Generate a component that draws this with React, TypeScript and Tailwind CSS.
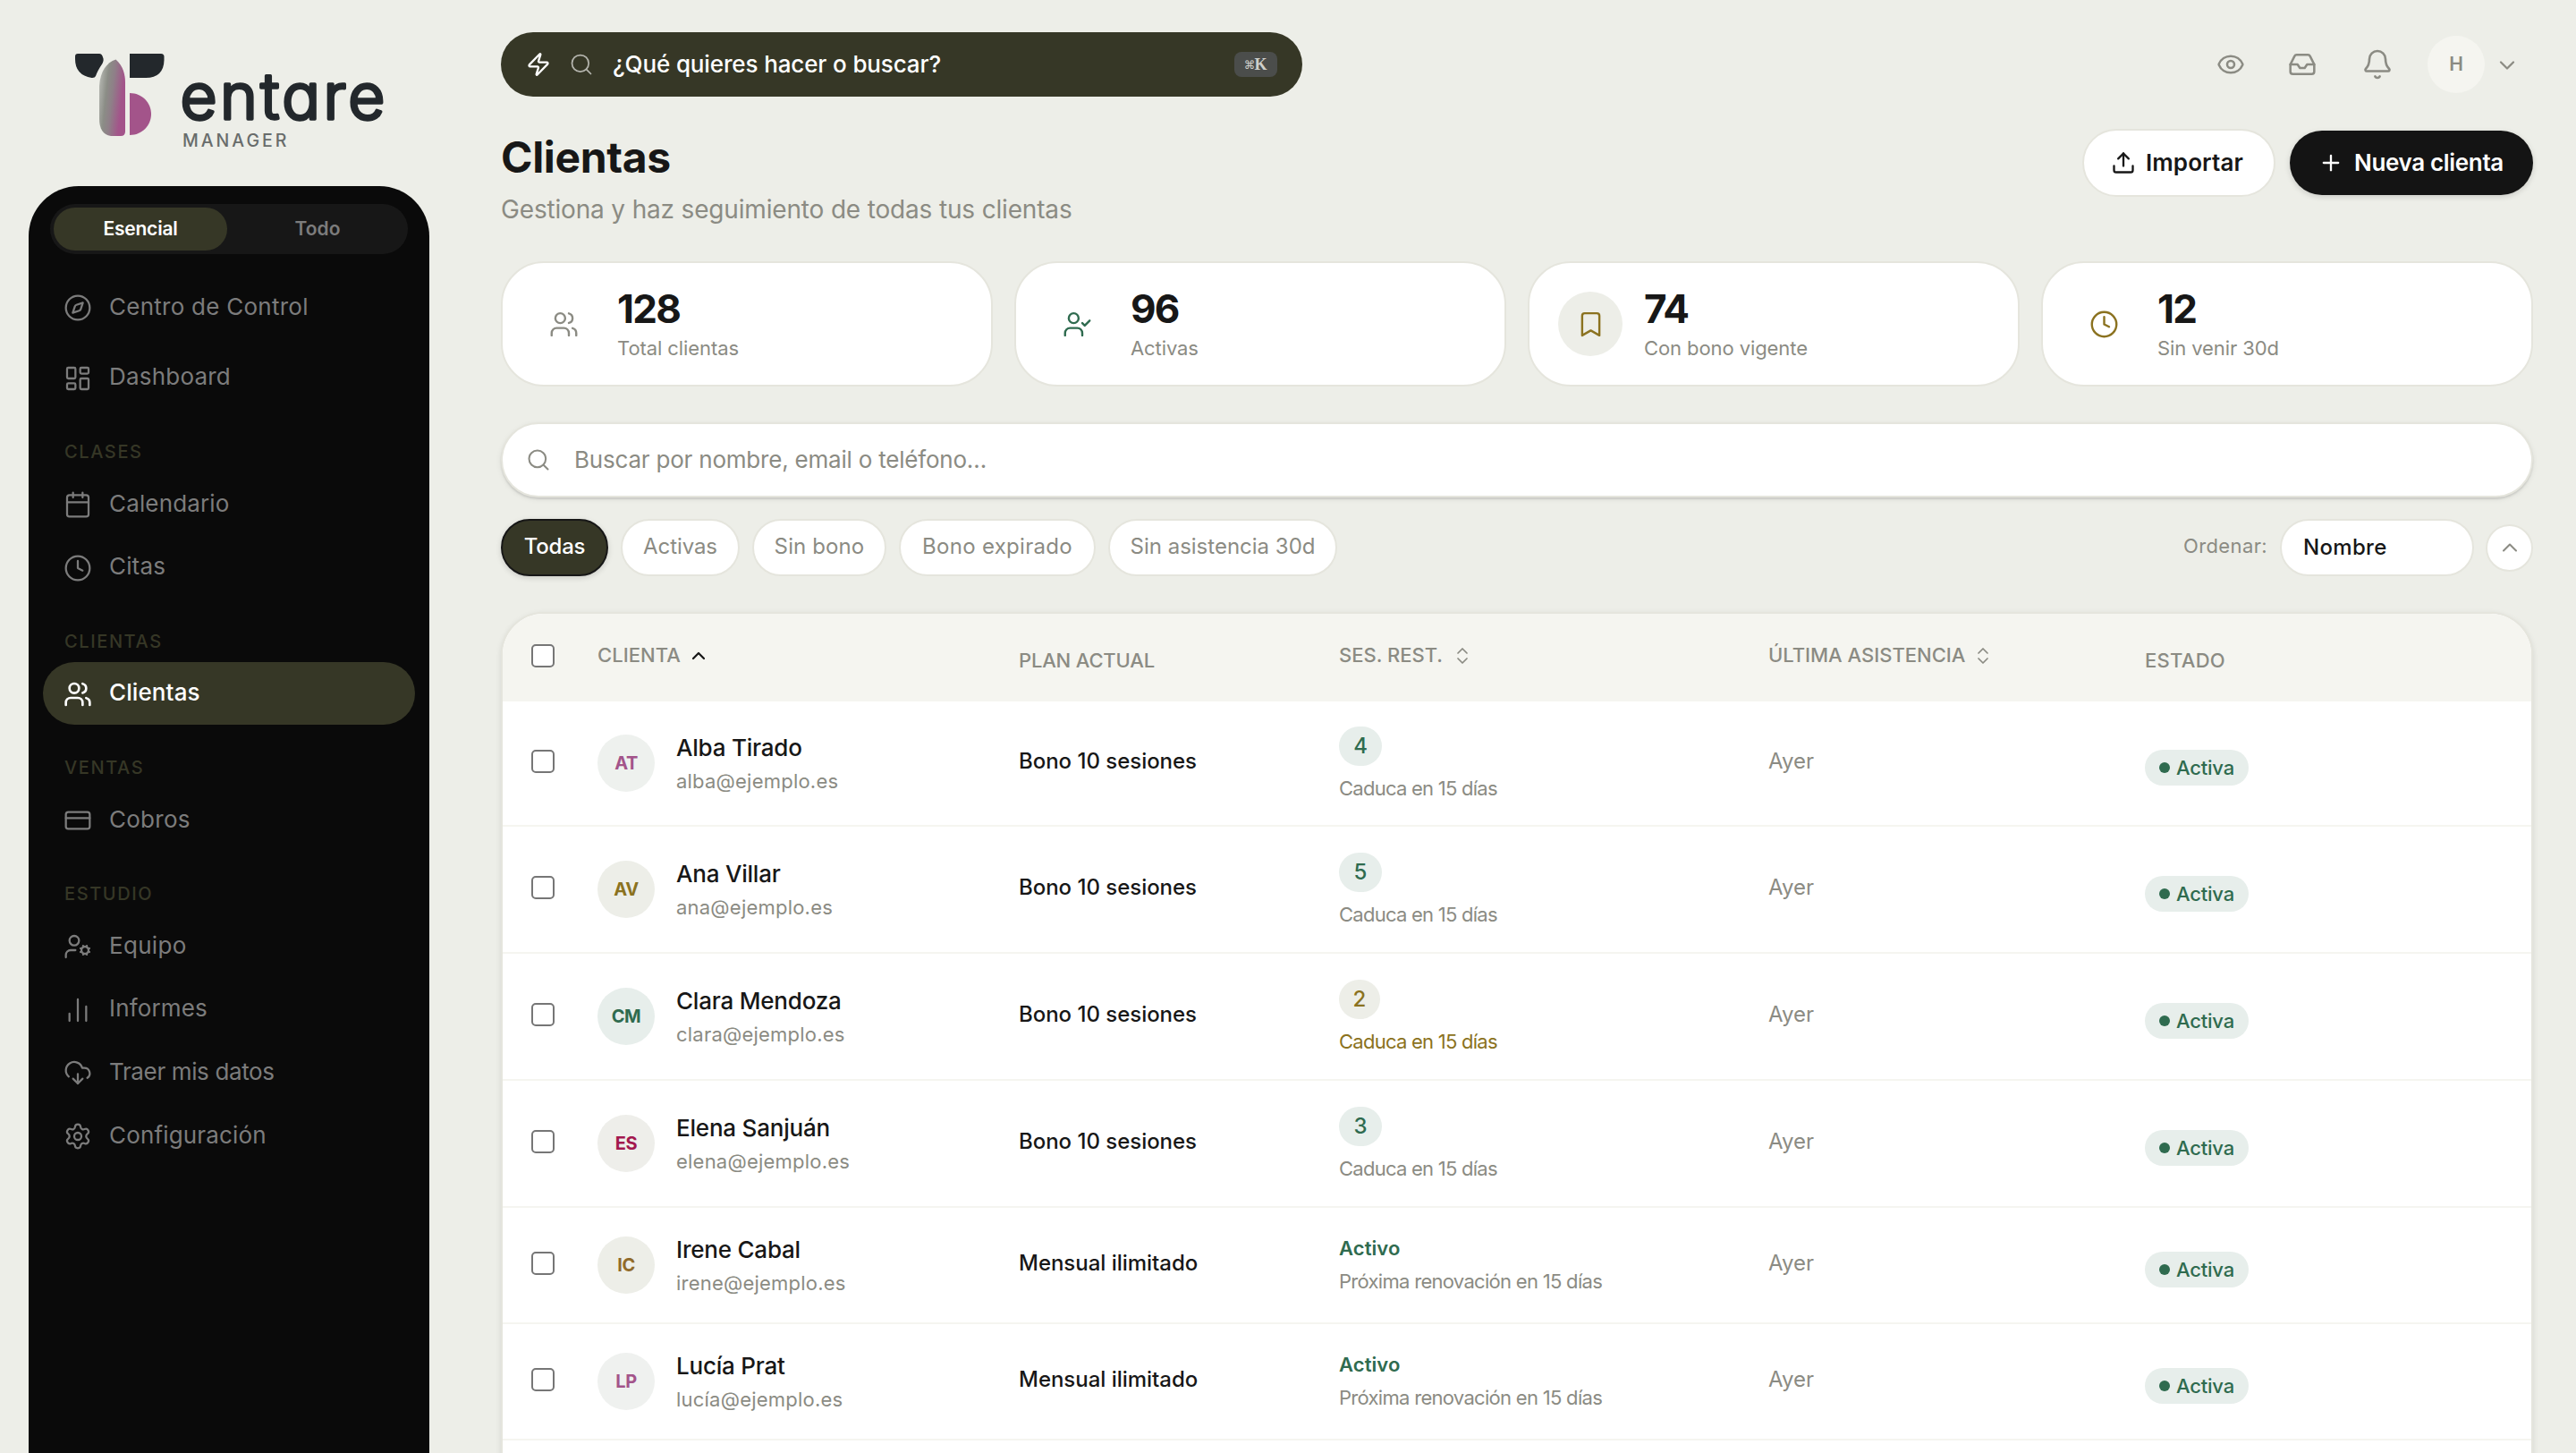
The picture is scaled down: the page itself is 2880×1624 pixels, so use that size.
import { useState } from "react";
import {
  Bell,
  Bookmark,
  Calendar,
  ChevronDown,
  ChevronUp,
  ChevronsUpDown,
  Clock,
  Eye,
  Inbox,
  Plus,
  Search,
  Upload,
  UserCheck,
  Users,
  Zap,
  Compass,
  CreditCard,
  LayoutDashboard,
  Settings,
  UserCog,
  ChartNoAxesColumn,
  CloudDownload,
} from "lucide-react";

const navGroups = [
  {
    title: "CLASES",
    items: [
      { name: "Calendario", icon: Calendar, tracking: "tracking-[0.006em]" },
      { name: "Citas", icon: Clock, tracking: "tracking-[0.006em]" },
    ],
  },
  {
    title: "CLIENTAS",
    items: [{ name: "Clientas", icon: Users, tracking: "tracking-[0.004em]" }],
  },
  {
    title: "VENTAS",
    items: [{ name: "Cobros", icon: CreditCard, tracking: "tracking-[0.010em]" }],
  },
  {
    title: "ESTUDIO",
    items: [
      { name: "Equipo", icon: UserCog, tracking: "tracking-[0.012em]" },
      { name: "Informes", icon: ChartNoAxesColumn, tracking: "tracking-[0.006em]" },
      { name: "Traer mis datos", icon: CloudDownload, tracking: "tracking-[-0.014em]" },
      { name: "Configuración", icon: Settings, tracking: "tracking-[0.006em]" },
    ],
  },
];

const stats = [
  { value: "128", label: "Total clientas", icon: Users, color: "text-[#8b8b83]", bg: "bg-white" },
  { value: "96", label: "Activas", icon: UserCheck, color: "text-[#2f6b4f]", bg: "bg-white" },
  { value: "74", label: "Con bono vigente", icon: Bookmark, color: "text-[#8b7220]", bg: "bg-[#edeee8]" },
  { value: "12", label: "Sin venir 30d", icon: Clock, color: "text-[#8b7220]", bg: "bg-white" },
];

const filters = [
  { name: "Todas", size: "w-[120px] tracking-[-0.008em]" },
  { name: "Activas", size: "w-[133px] tracking-[-0.003em]" },
  { name: "Sin bono", size: "w-[150px] tracking-[0.005em]" },
  { name: "Bono expirado", size: "w-[220px] tracking-[0.012em]" },
  { name: "Sin asistencia 30d", size: "w-[256px] tracking-normal" },
];

const clients = [
  { initials: "AT", name: "Alba Tirado", email: "alba@ejemplo.es", plan: "Bono 10 sesiones", sessions: 4, avatar: "bg-[#eef1ee] text-[#a3548a]", height: "h-[140px]" },
  { initials: "AV", name: "Ana Villar", email: "ana@ejemplo.es", plan: "Bono 10 sesiones", sessions: 5, avatar: "bg-[#edeee8] text-[#8b7220]", height: "h-[142px]" },
  { initials: "CM", name: "Clara Mendoza", email: "clara@ejemplo.es", plan: "Bono 10 sesiones", sessions: 2, avatar: "bg-[#e7eeeb] text-[#2f6b4f]", height: "h-[142px]" },
  { initials: "ES", name: "Elena Sanjuán", email: "elena@ejemplo.es", plan: "Bono 10 sesiones", sessions: 3, avatar: "bg-[#eeeeea] text-[#a3184f]", height: "h-[142px]" },
  { initials: "IC", name: "Irene Cabal", email: "irene@ejemplo.es", plan: "Mensual ilimitado", sessions: null, avatar: "bg-[#edeee8] text-[#916b2b]", height: "h-[130px]" },
  { initials: "LP", name: "Lucía Prat", email: "lucía@ejemplo.es", plan: "Mensual ilimitado", sessions: null, avatar: "bg-[#eff1ef] text-[#a3548a]", height: "h-[130px]" },
];

const Logo = () => (
  <svg width="360" height="120" viewBox="80 50 360 120" className="block">
    <defs>
      <linearGradient id="leaf" x1="0" y1="0.3" x2="1" y2="0.62">
        <stop offset="0" stopColor="#b3b5af" />
        <stop offset="0.28" stopColor="#8b8d86" />
        <stop offset="0.5" stopColor="#8f7f88" />
        <stop offset="0.85" stopColor="#a3548a" />
      </linearGradient>
    </defs>
    <path d="M87 60H111Q114 60 115 64Q116.500 67 114.500 71Q109 79 107 85Q106 87.300 102.500 87Q84 84 84 66V63Q84 60 87 60Z" fill="#23282c" />
    <path d="M145 60H180Q183.500 60 183.500 63.500V67Q183 87 163 87H145Z" fill="#23282c" />
    <path d="M129.500 66.500C138 74 140 84 140 92V147Q140 152 135 152H124C115 151 111 143 111 133V96C112 80 119 70 129.500 66.500Z" fill="url(#leaf)" />
    <path d="M145 104C159 104 169 115 169 127.500S159 151 145 151Z" fill="#a3548a" />
    <text
      x="201.500"
      y="132.500"
      fontSize="71"
      fontWeight="300"
      textLength="229"
      fill="#23282c"
      stroke="#23282c"
      strokeWidth="3.500"
      strokeLinejoin="round"
      className="font-[Inter,sans-serif] [font-feature-settings:'cv11']"
    >
      entare
    </text>
    <text x="204" y="163.500" fontSize="19.500" fontWeight="500" letterSpacing="3" fill="#686c6b" className="font-[Inter,sans-serif]">
      MANAGER
    </text>
  </svg>
);

const NavItem = ({ name, icon: Icon, tracking, active = false }: any) => (
  <div
    className={`flex h-[70.600px] items-center gap-[19px] rounded-full pl-[23px] text-[26px] ${tracking} ${
      active ? "bg-[#363726] font-medium text-white" : "text-[#7c7c7c]"
    }`}
  >
    <Icon size={32} strokeWidth={active ? 2 : 1.7} className="mt-0.5" />
    <span className="pb-0.5">{name}</span>
  </div>
);

const Sidebar = () => (
  <aside className="flex w-[480px] shrink-0 flex-col pl-8">
    <div className="h-[208px] pl-12 pt-[50px]">
      <Logo />
    </div>
    <div className="flex-1 rounded-t-[56px] bg-[#0a0a0a] px-4 pt-5">
      <div className="ml-2 flex h-14 w-[400px] rounded-full bg-[#171717] p-1 text-[21px] font-semibold">
        <div className="flex w-[194px] items-center justify-center rounded-full bg-[#363726] tracking-[-0.010em] text-white">
          Esencial
        </div>
        <div className="flex flex-1 items-center justify-center pl-1 text-[#7c7c7c]">Todo</div>
      </div>
      <nav className="pt-6">
        <NavItem name="Centro de Control" icon={Compass} tracking="tracking-[0.010em]" />
        <div className="h-2" />
        <NavItem name="Dashboard" icon={LayoutDashboard} tracking="tracking-[0.008em]" />
        {navGroups.map((group) => (
          <div key={group.title}>
            <div className="h-[70.600px] pl-6 pt-[33px] text-[20px] font-medium leading-[30px] tracking-[0.080em] text-[#363726]">
              {group.title}
            </div>
            {group.items.map((item) => (
              <NavItem key={item.name} {...item} active={item.name === "Clientas"} />
            ))}
          </div>
        ))}
      </nav>
    </div>
  </aside>
);

const TopBar = () => (
  <div className="flex h-36 shrink-0 items-center justify-between">
    <div className="flex h-[72px] w-[896px] items-center rounded-full bg-[#363726] pl-7 pr-7">
      <Zap size={28} strokeWidth={2} className="text-white" />
      <Search size={28} strokeWidth={1.5} className="ml-5 text-[#b4b4ad]" />
      <span className="ml-[21px] flex-1 pb-0.5 text-[26px] font-medium tracking-[-0.005em] text-white">
        ¿Qué quieres hacer o buscar?
      </span>
      <kbd className="flex h-7 w-12 items-center justify-center rounded-lg bg-[#4b4d4b] text-[#cfcfca]">
        <span className="font-['DejaVu_Sans_Mono',monospace] text-[18px]">⌘</span>
        <span className="font-['Liberation_Serif',serif] text-[18px] font-bold">K</span>
      </kbd>
    </div>
    <div className="flex items-center text-[#8b8b83]">
      <Eye size={32} strokeWidth={1.9} />
      <Inbox size={32} strokeWidth={1.9} className="ml-12" />
      <Bell size={36} strokeWidth={1.75} className="ml-[50px]" />
      <div className="ml-[38px] flex size-16 items-center justify-center rounded-full bg-[#f5f5f0] text-[21px] font-semibold">
        H
      </div>
      <ChevronDown size={28} strokeWidth={1.9} className="ml-[11px] mr-[15px] mt-0.5" />
    </div>
  </div>
);

const StatCards = () => (
  <div className="mt-8 grid shrink-0 grid-cols-4 gap-6">
    {stats.map(({ value, label, icon: Icon, color, bg }) => (
      <div key={label} className="flex h-[140px] items-center gap-6 rounded-[48px] border-2 border-[#e5e5dd] bg-white pl-8">
        <div className={`flex size-[72px] items-center justify-center rounded-full ${bg} ${color}`}>
          <Icon size={33} strokeWidth={1.75} />
        </div>
        <div className="pt-0.5">
          <div className="text-[44px] font-bold leading-[52px] tracking-[-0.040em] text-[#171717]">{value}</div>
          <div className="text-[22px] leading-9 tracking-[-0.004em] text-[#8b8b83]">{label}</div>
        </div>
      </div>
    ))}
  </div>
);

const FilterRow = () => {
  const [filter, setFilter] = useState("Todas");

  return (
    <div className="mt-6 flex h-16 shrink-0 items-center">
      <div className="flex gap-[14px]">
        {filters.map(({ name, size }) => (
          <button
            key={name}
            onClick={() => setFilter(name)}
            className={`h-16 rounded-full border-2 pb-0.5 text-[24px] ${size} ${
              filter === name
                ? "border-[#171717] bg-[#363726] font-[450] text-white shadow-[0_2px_6px_rgba(0,0,0,0.15)]"
                : "border-[#e5e5dd] bg-white text-[#8b8b83]"
            }`}
          >
            {name}
          </button>
        ))}
      </div>
      <span className="ml-auto pb-1 text-[22px] tracking-[0.017em] text-[#8b8b83]">Ordenar:</span>
      <div className="ml-[14px] flex h-16 w-[217px] items-center rounded-full border-2 border-[#e5e5dd] bg-white pl-6 text-[24px] font-[450] tracking-[0.013em] text-[#171717]">
        Nombre
      </div>
      <button className="ml-[13px] flex size-[53px] items-center justify-center rounded-full border-2 border-[#e5e5dd] bg-white text-[#8b8b83]">
        <ChevronUp size={28} strokeWidth={1.75} />
      </button>
    </div>
  );
};

const Checkbox = () => (
  <div className="mb-1 ml-8 size-[26px] rounded-[5px] border-2 border-[#767676] bg-white" />
);

const ClientRow = ({ client }: { client: (typeof clients)[number] }) => {
  const low = client.sessions === 2;

  return (
    <div
      className={`grid grid-cols-[106px_471px_358px_480px_421px_1fr] items-center border-b-2 border-[#f5f5f0] bg-white ${client.height}`}
    >
      <Checkbox />
      <div className="flex items-center">
        <div className={`flex size-16 items-center justify-center rounded-full text-[20px] font-bold tracking-[-0.020em] ${client.avatar}`}>
          {client.initials}
        </div>
        <div className="ml-6">
          <div className="text-[26px] font-medium leading-10 tracking-[-0.008em] text-[#171717]">{client.name}</div>
          <div className="text-[22px] leading-[35px] tracking-[0.010em] text-[#8b8b83]">{client.email}</div>
        </div>
      </div>
      <div className="pb-1 text-[24px] font-[450] tracking-[-0.001em] text-[#171717]">{client.plan}</div>
      {client.sessions ? (
        <div>
          <div className="flex h-[55px] items-center">
            <div
              className={`flex h-11 items-center justify-center rounded-full text-[24px] font-medium ${
                low ? "w-[46px] bg-[#edeee8] text-[#8b7220]" : "w-12 bg-[#e7eeeb] text-[#2f6b4f]"
              }`}
            >
              {client.sessions}
            </div>
          </div>
          <div className={`text-[22px] leading-[38px] tracking-[-0.034em] ${low ? "text-[#8b7220]" : "text-[#8b8b83]"}`}>
            Caduca en 15 días
          </div>
        </div>
      ) : (
        <div>
          <div className="text-[22px] font-semibold leading-9 tracking-[0.004em] text-[#2f6b4f]">Activo</div>
          <div className="text-[22px] leading-[39px] tracking-[-0.032em] text-[#8b8b83]">
            Próxima renovación en 15 días
          </div>
        </div>
      )}
      <div className="pb-1 text-[24px] text-[#8b8b83]">Ayer</div>
      <div className="pt-[10px]">
        <div className="flex h-10 w-[116px] items-center rounded-full bg-[#e7eeeb] pl-4 text-[22px] font-medium tracking-[-0.009em] text-[#2f6b4f]">
          <span className="mr-[7px] size-3 rounded-full bg-[#2f6b4f]" />
          Activa
        </div>
      </div>
    </div>
  );
};

const ClientsTable = () => (
  <div className="mt-10 h-[1200px] shrink-0 overflow-hidden rounded-[48px] border-2 border-[#e5e5dd] bg-white shadow-[0_2px_6px_rgba(0,0,0,0.1)]">
    <div className="grid h-[98px] grid-cols-[106px_471px_358px_480px_421px_1fr] items-center bg-[#f5f5f0] text-[22px] font-medium text-[#8b8b83]">
      <Checkbox />
      <div className="flex items-center gap-2 pb-1.5 tracking-[0.003em]">
        CLIENTA <ChevronUp size={24} strokeWidth={2.25} className="mt-0.5 text-[#171717]" />
      </div>
      <div className="pt-1.5 tracking-[-0.008em]">PLAN ACTUAL</div>
      <div className="flex items-center gap-2.5 pb-1.5">
        SES. REST. <ChevronsUpDown size={24} strokeWidth={1.75} className="mt-0.5" />
      </div>
      <div className="flex items-center gap-2 pb-1.5">
        ÚLTIMA ASISTENCIA <ChevronsUpDown size={24} strokeWidth={1.75} className="mt-0.5" />
      </div>
      <div className="pt-1.5 tracking-[0.013em]">ESTADO</div>
    </div>
    {clients.map((client) => (
      <ClientRow key={client.initials} client={client} />
    ))}
  </div>
);

const App = () => {
  return (
    <div className="flex h-[1624px] w-[2880px] overflow-hidden bg-[#edeee8] font-[Inter,sans-serif]">
      <Sidebar />
      <main className="flex flex-1 flex-col pl-20 pr-12">
        <TopBar />
        <header className="flex shrink-0 items-start justify-between">
          <div>
            <h1 className="text-[48px] font-bold leading-[64px] tracking-[-0.007em] text-[#171717]">Clientas</h1>
            <p className="text-[28px] leading-[52px] tracking-[-0.006em] text-[#8b8b83]">
              Gestiona y haz seguimiento de todas tus clientas
            </p>
          </div>
          <div className="flex items-center gap-4 text-[26px] font-semibold">
            <button className="flex h-[76px] w-[216px] items-center rounded-full border-2 border-[#e5e5dd] bg-white pl-[30px] text-[#171717]">
              <Upload size={28} strokeWidth={2} />
              <span className="ml-[11px] pb-0.5 tracking-[0.004em]">Importar</span>
            </button>
            <button className="flex h-[72px] w-[272px] items-center rounded-full bg-[#141414] pl-8 text-white shadow-[0_2px_6px_rgba(0,0,0,0.15)]">
              <Plus size={28} strokeWidth={2} />
              <span className="ml-3 pb-0.5 tracking-[-0.013em]">Nueva clienta</span>
            </button>
          </div>
        </header>
        <StatCards />
        <div className="mt-10 flex h-[84px] shrink-0 items-center rounded-full border-2 border-[#e5e5dd] bg-white pl-[26px] text-[#8b8b83] shadow-[0_2px_2px_rgba(0,0,0,0.1),0_2px_6px_rgba(0,0,0,0.08)]">
          <Search size={28} strokeWidth={1.75} />
          <span className="ml-[26px] pb-0.5 text-[26px] tracking-[-0.008em]">Buscar por nombre, email o teléfono…</span>
        </div>
        <FilterRow />
        <ClientsTable />
      </main>
    </div>
  );
};

export default App;
